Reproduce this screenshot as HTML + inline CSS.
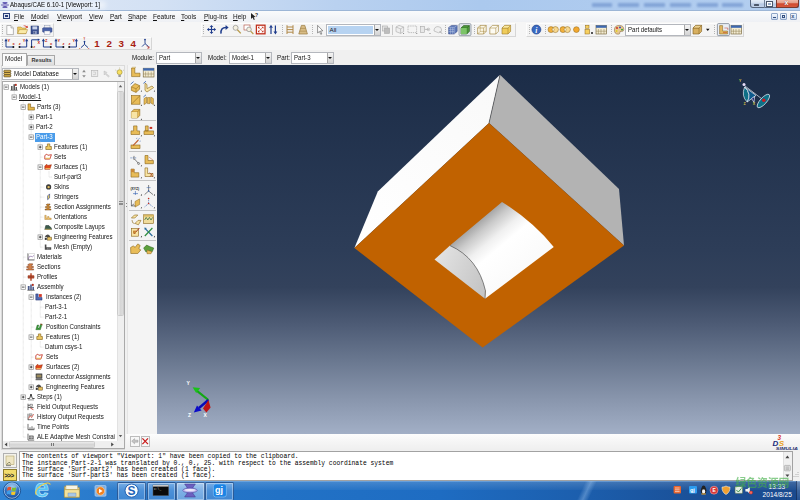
<!DOCTYPE html><html><head><meta charset="utf-8"><title>Abaqus/CAE 6.10-1 [Viewport: 1]</title><style>
*{margin:0;padding:0;box-sizing:border-box}
html,body{width:800px;height:500px;overflow:hidden;background:#f0f0f0}
body{position:relative;font-family:"Liberation Sans",sans-serif;font-size:6.4px;color:#1a1a1a;line-height:1}
.a{position:absolute}
.t{position:absolute;white-space:nowrap;line-height:8px;height:8px}
.m{position:absolute;white-space:nowrap;font-family:"Liberation Mono",monospace;font-size:6.32px;line-height:7px;height:7px;color:#000}
.sel{position:absolute;background:#fff;border:1px solid #b4b7bd;height:12px}
.sel i{position:absolute;right:0;top:0;bottom:0;width:6px;background:linear-gradient(#f4f4f4,#d4d4d4);border-left:1px solid #a8a8a8}
.sel i:after{content:"";position:absolute;left:0.4px;top:4px;border:2.1px solid transparent;border-top:2.8px solid #111;border-bottom:0}
.sel span{position:absolute;left:2px;top:1.2px;line-height:8px;white-space:nowrap;font-size:6.9px;transform:scaleX(.88);transform-origin:0 50%;color:#111}
.lb{font-size:6.9px;transform:scaleX(.9);transform-origin:0 50%;color:#111}
.bx{position:absolute;width:5px;height:5px;border:1px solid #8a8a8a;background:#fff}
.bx:before{content:"";position:absolute;left:0.5px;top:1px;width:2px;height:1px;background:#333}
.bx.p:after{content:"";position:absolute;left:1px;top:0.5px;width:1px;height:2px;background:#333}
.grip{position:absolute;width:1px;border-left:1px dotted #b4b4b4}
.tr{font-size:7px;transform:scaleX(.875);transform-origin:0 50%;color:#151515}
.sep{position:absolute;width:1px;background:#c8c8c8}
</style></head><body>
<div class="a" style="left:0;top:0;width:800px;height:10px;background:linear-gradient(90deg,#e0e9f6 0%,#d3e1f4 20%,#b9d1f0 42%,#abc9ee 60%,#b3cef0 100%)"></div>
<div class="a" style="left:0;top:9.5px;width:800px;height:1px;background:#9db6d6"></div>
<div class="a" style="left:6px;top:1px;width:100px;height:7.5px;background:#fff;opacity:.5;filter:blur(2px);border-radius:4px"></div>
<svg class="a" style="left:1px;top:1px" width="8" height="8" viewBox="0 0 8 8"><path d="M1.2,1 H6.8 Q5.2,2.6 5.2,4 Q5.2,5.4 6.8,7 H1.2 Q2.8,5.4 2.8,4 Q2.8,2.6 1.2,1Z" fill="#6a63b8"/><ellipse cx="4" cy="4" rx="3.8" ry="1.1" fill="#b9b5e4" stroke="#4b4696" stroke-width="0.4"/></svg>
<div class="t" style="left:10px;top:1px;font-size:6.6px;transform:scaleX(.93);transform-origin:0 50%;color:#000">Abaqus/CAE 6.10-1 [Viewport: 1]</div>
<div class="a" style="left:592px;top:2.5px;width:20px;height:4.5px;background:#5f85c4;opacity:.55;filter:blur(1.2px)"></div>
<div class="a" style="left:618px;top:2.5px;width:21px;height:4.5px;background:#5f85c4;opacity:.55;filter:blur(1.2px)"></div>
<div class="a" style="left:644px;top:2.5px;width:21px;height:4.5px;background:#5f85c4;opacity:.55;filter:blur(1.2px)"></div>
<div class="a" style="left:670px;top:2.5px;width:21px;height:4.5px;background:#5f85c4;opacity:.55;filter:blur(1.2px)"></div>
<div class="a" style="left:697px;top:2.5px;width:21px;height:4.5px;background:#5f85c4;opacity:.55;filter:blur(1.2px)"></div>
<div class="a" style="left:722px;top:2.5px;width:21px;height:4.5px;background:#5f85c4;opacity:.55;filter:blur(1.2px)"></div>
<div class="a" style="left:749.5px;top:0;width:49px;height:8.3px;border:0.7px solid #56657e;border-top:0;border-radius:0 0 3px 3px;background:linear-gradient(#e4edf8,#cfdcee 48%,#b3c6e2 52%,#c3d3ea)"></div>
<div class="a" style="left:775.5px;top:0;width:23px;height:8.3px;border:0.7px solid #7a3a30;border-top:0;border-radius:0 0 3px 0;background:linear-gradient(#efb8a8,#e39a86 45%,#cf4a30 52%,#d8583c)"></div>
<div class="a" style="left:763.8px;top:0;width:0.7px;height:8px;background:#6f7f96"></div>
<div class="a" style="left:754px;top:4.2px;width:5.4px;height:2.2px;background:#fff;border:0.5px solid #4a566a;border-radius:0.6px"></div>
<div class="a" style="left:767px;top:1.6px;width:5px;height:4.6px;border:0.9px solid #fdfdfd;outline:0.5px solid #4a566a;background:rgba(120,140,170,.5)"></div>
<div class="t" style="left:784.6px;top:-0.9px;font-size:7px;font-weight:bold;color:#fff;text-shadow:0 0 1px #5a2018">x</div>
<div class="a" style="left:0;top:10.5px;width:800px;height:11.5px;background:linear-gradient(#fafbfc,#eef0f4)"></div>
<div class="a" style="left:3px;top:13px;width:6.5px;height:6px;border:1px solid #2a3f7a;border-top-width:1.5px;background:#dfe6f4"></div><div class="a" style="left:4.7px;top:15.3px;width:3px;height:2px;background:#2a3f7a"></div>
<div class="t" style="left:14px;top:12.5px;font-size:6.9px;transform:scaleX(.94);transform-origin:0 50%;color:#111"><u>F</u>ile</div>
<div class="t" style="left:31px;top:12.5px;font-size:6.9px;transform:scaleX(.94);transform-origin:0 50%;color:#111"><u>M</u>odel</div>
<div class="t" style="left:56.5px;top:12.5px;font-size:6.9px;transform:scaleX(.94);transform-origin:0 50%;color:#111"><u>V</u>iewport</div>
<div class="t" style="left:89px;top:12.5px;font-size:6.9px;transform:scaleX(.94);transform-origin:0 50%;color:#111"><u>V</u>iew</div>
<div class="t" style="left:109.5px;top:12.5px;font-size:6.9px;transform:scaleX(.94);transform-origin:0 50%;color:#111"><u>P</u>art</div>
<div class="t" style="left:128px;top:12.5px;font-size:6.9px;transform:scaleX(.94);transform-origin:0 50%;color:#111"><u>S</u>hape</div>
<div class="t" style="left:152.5px;top:12.5px;font-size:6.9px;transform:scaleX(.94);transform-origin:0 50%;color:#111"><u>F</u>eature</div>
<div class="t" style="left:181px;top:12.5px;font-size:6.9px;transform:scaleX(.94);transform-origin:0 50%;color:#111"><u>T</u>ools</div>
<div class="t" style="left:203.5px;top:12.5px;font-size:6.9px;transform:scaleX(.94);transform-origin:0 50%;color:#111"><u>P</u>lug-ins</div>
<div class="t" style="left:233px;top:12.5px;font-size:6.9px;transform:scaleX(.94);transform-origin:0 50%;color:#111"><u>H</u>elp</div>
<svg class="a" style="left:250px;top:12px" width="9" height="9" viewBox="0 0 9 9"><path d="M1,1 L1,7 L2.6,5.6 L3.8,8 L4.8,7.5 L3.7,5.2 L5.6,5 Z" fill="#222"/><text x="5" y="5" font-family="Liberation Sans, sans-serif" font-size="5" font-weight="bold" fill="#222">?</text></svg>
<div class="a" style="left:771px;top:12.5px;width:7px;height:7px;border:1px solid #8fa6c8;border-radius:1px;background:linear-gradient(#f4f8fd,#cfdcf0)"></div>
<div class="a" style="left:780px;top:12.5px;width:7px;height:7px;border:1px solid #8fa6c8;border-radius:1px;background:linear-gradient(#f4f8fd,#cfdcf0)"></div>
<div class="a" style="left:789.5px;top:12.5px;width:7px;height:7px;border:1px solid #8fa6c8;border-radius:1px;background:linear-gradient(#f4f8fd,#cfdcf0)"></div>
<div class="a" style="left:773px;top:17px;width:3px;height:1px;background:#34507f"></div>
<div class="a" style="left:782px;top:14.5px;width:3px;height:3px;border:1px solid #34507f"></div>
<div class="t" style="left:791.2px;top:11.6px;font-size:5.5px;font-weight:bold;color:#34507f">x</div>
<div class="a" style="left:0;top:22px;width:800px;height:28px;background:#f6f6f6"></div>
<div class="a" style="left:0px;top:22.5px;width:54px;height:14px;border-right:1px solid #d6d6d6;border-bottom:1px solid #d6d6d6;border-left:1px solid #fdfdfd;border-top:1px solid #fdfdfd;background:#f4f4f4"></div>
<div class="a" style="left:0px;top:36.5px;width:152px;height:13px;border-right:1px solid #d6d6d6;border-bottom:1px solid #d6d6d6;border-left:1px solid #fdfdfd;border-top:1px solid #fdfdfd;background:#f4f4f4"></div>
<div class="a" style="left:201px;top:22.5px;width:315px;height:14px;border-right:1px solid #d6d6d6;border-bottom:1px solid #d6d6d6;border-left:1px solid #fdfdfd;border-top:1px solid #fdfdfd;background:#f4f4f4"></div>
<div class="a" style="left:526px;top:22.5px;width:218px;height:14px;border-right:1px solid #d6d6d6;border-bottom:1px solid #d6d6d6;border-left:1px solid #fdfdfd;border-top:1px solid #fdfdfd;background:#f4f4f4"></div>
<div class="grip" style="left:2px;top:25px;height:9px"></div>
<div class="grip" style="left:2px;top:39px;height:8px"></div>
<div class="grip" style="left:203px;top:25px;height:9px"></div>
<div class="grip" style="left:281.5px;top:25px;height:9px"></div>
<div class="grip" style="left:312px;top:25px;height:9px"></div>
<div class="grip" style="left:444.5px;top:25px;height:9px"></div>
<div class="grip" style="left:474px;top:25px;height:9px"></div>
<div class="grip" style="left:528.5px;top:25px;height:9px"></div>
<div class="grip" style="left:545px;top:25px;height:9px"></div>
<div class="grip" style="left:611px;top:25px;height:9px"></div>
<div class="grip" style="left:714px;top:25px;height:9px"></div>
<div class="sep" style="left:392px;top:24.5px;height:10px"></div>
<svg class="a" style="left:0;top:0" width="800" height="66" viewBox="0 0 800 66" font-family="Liberation Sans, sans-serif"><style>.r{font-size:4px;font-weight:bold;fill:#c41808}</style><path d="M6.8,25.5 H11 L13.4,28 V34.6 H6.8 Z" fill="#fdfdfd" stroke="#8a8a8a" stroke-width="0.6"/><path d="M11,25.5 V28 H13.4" fill="#e4e4e4" stroke="#8a8a8a" stroke-width="0.5"/><path d="M17.6,27 H21 L22,28 H26 V33.6 H17.6 Z" fill="#ecca62" stroke="#a8842a" stroke-width="0.5"/><path d="M19.4,29.6 H27.6 L26,33.6 H17.6 Z" fill="#faeaa6" stroke="#a8842a" stroke-width="0.5"/><path d="M22.4,26.2 Q25,24.6 27,26.4 L27.6,25.4 L27.8,28 L25.4,27.6 L26.2,26.9 Q24.8,25.8 22.4,26.2Z" fill="#d02818"/><rect x="31" y="26" width="7.6" height="8" fill="#3c5190" stroke="#27386c" stroke-width="0.5"/><rect x="32.4" y="26.4" width="4.8" height="3" fill="#c9d3ea"/><rect x="33" y="31" width="3.8" height="3" fill="#8e9cc4"/><rect x="33.6" y="31.6" width="1" height="2" fill="#27386c"/><rect x="44.4" y="25.2" width="5.6" height="3" fill="#f2f2f2" stroke="#7a86a8" stroke-width="0.4"/><rect x="42.6" y="27.8" width="9.4" height="4.4" rx="0.8" fill="#4a62a8" stroke="#2c3f7c" stroke-width="0.5"/><rect x="44.4" y="31" width="5.6" height="3.6" fill="#fafafa" stroke="#7a86a8" stroke-width="0.4"/><path d="M6,40.4 V47 H13.4" fill="none" stroke="#1f3c8c" stroke-width="1"/><path d="M6,38.6 l-1.6,2.6 h3.2z" fill="#1f3c8c"/><circle cx="13.4" cy="47" r="1" fill="#111"/><text x="7.6" y="41.6" class="r">Y</text><text x="12.6" y="45.4" class="r">x</text><path d="M26.7,40.4 V47 H19.5" fill="none" stroke="#1f3c8c" stroke-width="1"/><path d="M26.7,38.6 l-1.6,2.6 h3.2z" fill="#1f3c8c"/><circle cx="19.5" cy="47" r="1" fill="#111"/><text x="22.7" y="41.6" class="r">Y</text><text x="18.7" y="45.4" class="r">z</text><path d="M31.6,47 V39.8 H38.2" fill="none" stroke="#1f3c8c" stroke-width="1"/><path d="M40.0,39.8 l-2.2,-1.3 v2.6z" fill="#1f3c8c"/><circle cx="31.6" cy="47" r="1" fill="#111"/><text x="37.6" y="44.4" class="r">X</text><text x="33.2" y="48" class="r">z</text><path d="M43.4,40.4 V47 H50.8" fill="none" stroke="#1f3c8c" stroke-width="1"/><path d="M43.4,38.6 l-1.6,2.6 h3.2z" fill="#1f3c8c"/><circle cx="50.8" cy="47" r="1" fill="#111"/><text x="45.0" y="41.6" class="r">Z</text><text x="50.0" y="45.4" class="r">x</text><path d="M56,40.4 V47 H63.4" fill="none" stroke="#1f3c8c" stroke-width="1"/><path d="M56,38.6 l-1.6,2.6 h3.2z" fill="#1f3c8c"/><circle cx="63.4" cy="47" r="1" fill="#111"/><text x="57.6" y="41.6" class="r">Y</text><text x="62.6" y="45.4" class="r">z</text><path d="M76.4,40.4 V47 H69.2" fill="none" stroke="#1f3c8c" stroke-width="1"/><path d="M76.4,38.6 l-1.6,2.6 h3.2z" fill="#1f3c8c"/><circle cx="69.2" cy="47" r="1" fill="#111"/><text x="72.4" y="41.6" class="r">Y</text><text x="68.4" y="45.4" class="r">z</text><path d="M84.5,41 V44.4 L81,47.6 M84.5,44.4 L88,47.6" fill="none" stroke="#1f3c8c" stroke-width="1"/><circle cx="84.5" cy="41.6" r="0.9" fill="#1f3c8c"/><text x="83.6" y="40.2" style="font-size:2.6px" class="r">Y</text><text x="79.2" y="49" style="font-size:2.4px" class="r">z</text><text x="88" y="49" style="font-size:2.4px" class="r">x</text><text x="94.2" y="47.3" font-size="9.8" font-weight="bold" fill="#a82010">1</text><text x="106.4" y="47.3" font-size="9.8" font-weight="bold" fill="#a82010">2</text><text x="118.6" y="47.3" font-size="9.8" font-weight="bold" fill="#a82010">3</text><text x="130.6" y="47.3" font-size="9.8" font-weight="bold" fill="#a82010">4</text><path d="M145,39.2 V43.6 L142,46.6 M145,43.6 L148.6,46.6" fill="none" stroke="#1f3c8c" stroke-width="0.9"/><circle cx="145" cy="39.6" r="0.8" fill="#1f3c8c"/><path d="M146.6,46 l2.6,2 M147.4,48.6 l1.8,-0.6 l-0.4,-1.8" fill="none" stroke="#b42014" stroke-width="0.6"/><path d="M211.5,24.9 l1.8,2.2 h-1.2 v1.8 h1.8 v-1.2 l2.2,1.8 l-2.2,1.8 v-1.2 h-1.8 v1.8 h1.2 l-1.8,2.2 l-1.8,-2.2 h1.2 v-1.8 h-1.8 v1.2 l-2.2,-1.8 l2.2,-1.8 v1.2 h1.8 v-1.8 h-1.2z" fill="#1f3c8c"/><path d="M221,33.6 Q220.4,27.4 226,27.4" fill="none" stroke="#1f3c8c" stroke-width="1.5"/><path d="M225.6,25 l3,2.5 l-3,2.4z" fill="#1f3c8c"/><circle cx="235.6" cy="27.8" r="2.5" fill="#f4f0e0" stroke="#8c8c8c" stroke-width="0.7"/><path d="M237.4,29.8 L240.8,33.4" stroke="#b89a4a" stroke-width="1.3"/><rect x="244" y="25" width="6" height="5" fill="#fff" stroke="#b04a3a" stroke-width="0.6"/><circle cx="249" cy="29.4" r="2.3" fill="#f4f0e0" stroke="#8c8c8c" stroke-width="0.7"/><path d="M250.6,31.2 L253.4,34" stroke="#b89a4a" stroke-width="1.2"/><rect x="256.4" y="25.2" width="8.6" height="8.6" fill="#fff" stroke="#c0301c" stroke-width="1.3"/><path d="M258,26.8 l2,0 l-2,2z M263.4,26.8 l0,2 l-2,-2z M258,32.2 l0,-2 l2,2z M263.4,32.2 l-2,0 l2,-2z" fill="#c0301c"/><path d="M258.4,27.2 L263,31.8 M263,27.2 L258.4,31.8" stroke="#c0301c" stroke-width="0.6"/><path d="M271,34 V27.4 M275.4,25.4 V32" stroke="#1f3c8c" stroke-width="1.2" fill="none"/><path d="M271,24.8 l-1.9,3 h3.8z M275.4,34.4 l-1.9,-3 h3.8z" fill="#1f3c8c"/><path d="M287,25.2 V34 M293,25.2 V34 M287,27 H293 M287,29.6 H293 M287,32.2 H293" stroke="#b08848" stroke-width="1" fill="none"/><path d="M301.4,25.4 H304.8 L307.4,34 H298.8 Z" fill="#d8bc86" stroke="#98783c" stroke-width="0.7"/><path d="M300.6,28.4 H305.6 M299.8,31.2 H306.4" stroke="#98783c" stroke-width="0.5"/><path d="M317.6,25.4 V33 L319.4,31.4 L320.8,34.4 L321.8,33.9 L320.5,31 L322.8,30.8 Z" fill="#fff" stroke="#333" stroke-width="0.5"/><rect x="382.6" y="26" width="5" height="5" fill="#e4e4e4" stroke="#a8a8a8" stroke-width="0.6"/><rect x="384.6" y="28" width="5" height="5.4" fill="#bdbdbd" stroke="#a8a8a8" stroke-width="0.6"/><path d="M396,27 l3,-1.6 l4.6,1.6 v4.6 l-3,1.8 l-4.6,-1.8z M396,27 l4.6,1.8 l3,-1.8 M400.6,28.8 v4.6" fill="#eee" stroke="#a8a8a8" stroke-width="0.6"/><circle cx="403.6" cy="33.4" r="0.5" fill="#666"/><rect x="408" y="26" width="8.6" height="6.6" fill="none" stroke="#a8a8a8" stroke-width="0.7" stroke-dasharray="1.4 0.8"/><circle cx="416.8" cy="33.6" r="0.5" fill="#666"/><rect x="420.6" y="26.4" width="4" height="6" fill="#e8e8e8" stroke="#a8a8a8" stroke-width="0.6"/><path d="M425,29.4 h4" stroke="#a8a8a8" stroke-width="0.7"/><circle cx="428.4" cy="29.4" r="1.3" fill="none" stroke="#a8a8a8" stroke-width="0.6"/><circle cx="430" cy="33.6" r="0.5" fill="#666"/><path d="M434,31 q0,-4.4 4,-4.4 q3.6,0 3.6,3.4 q0,2.8 -3,2.8 z" fill="#f0f0f0" stroke="#a8a8a8" stroke-width="0.6"/><path d="M439.6,31 l2.6,2.8" stroke="#a8a8a8" stroke-width="0.9"/><path d="M448.6,27.4 l3,-2 h5.6 v6 l-3,2.6 h-5.6z" fill="#5d78b8" stroke="#2c3f7c" stroke-width="0.5"/><path d="M448.6,29.4 h5.6 M448.6,31.6 h5.6 M450.6,27.4 v6.6 M452.6,27.4 v6.6 M448.6,27.4 h5.6 v6.6 M454.2,27.4 l3,-2" stroke="#cdd6ee" stroke-width="0.4" fill="none"/><rect x="459" y="23.6" width="12" height="12" rx="1.2" fill="#dfe4ea" stroke="#7c8694" stroke-width="0.7"/><path d="M461,28 l2.6,-2.4 h5.8 v5.8 l-2.6,2.6 h-5.8z" fill="#4e9a3c" stroke="#23561a" stroke-width="0.6"/><path d="M461,28 h5.8 v6 M466.8,28 l2.6,-2.4" stroke="#23561a" stroke-width="0.5" fill="none"/><rect x="461" y="28" width="5.8" height="6" fill="#7cc468"/><path d="M477.6,28 l2.6,-2.6 h6 v6 l-2.6,2.6 h-6z" fill="#fbf6e4" stroke="#9a7a2c" stroke-width="0.6"/><path d="M477.6,28 h6 v6 M483.6,28 l2.6,-2.6" stroke="#9a7a2c" stroke-width="0.5" fill="none"/><path d="M480.2,25.4 v6 h6 M480.2,31.4 l-2.6,2.6" stroke="#9a7a2c" stroke-width="0.4" fill="none"/><path d="M489.8,28 l2.6,-2.6 h6 v6 l-2.6,2.6 h-6z" fill="#fdfbf2" stroke="#9a7a2c" stroke-width="0.6"/><path d="M489.8,28 h6 v6 M495.8,28 l2.6,-2.6" stroke="#9a7a2c" stroke-width="0.5" fill="none"/><path d="M502,28 l2.6,-2.6 h6 v6 l-2.6,2.6 h-6z" fill="#f0cc5a" stroke="#9a7a2c" stroke-width="0.6"/><path d="M502,28 h6 v6 M508,28 l2.6,-2.6" stroke="#9a7a2c" stroke-width="0.5" fill="none"/><path d="M502,28 l2.6,-2.6 h6 l-2.6,2.6z" fill="#fbe9a0" stroke="#9a7a2c" stroke-width="0.4"/><circle cx="536.4" cy="29.6" r="4.5" fill="#3868c0" stroke="#1c3c84" stroke-width="0.6"/><text x="535.3" y="32.6" font-size="7.5" font-weight="bold" font-style="italic" fill="#fff" font-family="Liberation Serif, serif">i</text><circle cx="551" cy="29.6" r="3" fill="#f2b03c" stroke="#8c6414" stroke-width="0.5"/><circle cx="555.4" cy="29.6" r="3" fill="#f7d890" stroke="#8c6414" stroke-width="0.5"/><path d="M553.2,27.5 a3,3 0 0 1 0,4.2 a3,3 0 0 1 0,-4.2z" fill="#fff6dc" stroke="#8c6414" stroke-width="0.4"/><circle cx="563" cy="29.6" r="3" fill="#f2b03c" stroke="#8c6414" stroke-width="0.5"/><circle cx="567.4" cy="29.6" r="3" fill="#f7d890" stroke="#8c6414" stroke-width="0.5"/><path d="M565.2,27.5 a3,3 0 0 1 0,4.2 a3,3 0 0 1 0,-4.2z" fill="#fff6dc" stroke="#8c6414" stroke-width="0.4"/><circle cx="576.4" cy="29.6" r="2.9" fill="#f2a830" stroke="#8c6414" stroke-width="0.5"/><rect x="585.6" y="25.2" width="3.4" height="3" fill="#f7d060" stroke="#8c6414" stroke-width="0.5"/><rect x="585" y="29.2" width="4.6" height="4.8" fill="#f7d060" stroke="#8c6414" stroke-width="0.5"/><rect x="591" y="32" width="2" height="2" fill="#555"/><rect x="596" y="25.4" width="10.6" height="8.6" fill="#f4ecd2" stroke="#6c5a2c" stroke-width="0.6"/><rect x="596" y="25.4" width="10.6" height="2.4" fill="#3e68b0"/><path d="M598.4,29 v5 M601,29 v5 M604,29 v5 M596,31.2 h10.6" stroke="#8a7a4c" stroke-width="0.5"/><path d="M614.4,30 q0,-4.6 4.8,-4.6 q4.6,0 4.6,4 q0,2.4 -2.6,2 q-1.6,-0.2 -1.4,1.2 q0.2,1.6 -1.6,1.6 q-3.8,0 -3.8,-4.2z" fill="#e8c890" stroke="#7c5c2c" stroke-width="0.5"/><circle cx="617" cy="28" r="0.9" fill="#d02020"/><circle cx="620" cy="27.4" r="0.9" fill="#2040c0"/><circle cx="622" cy="29.6" r="0.9" fill="#20a030"/><circle cx="616.6" cy="31" r="0.9" fill="#e0d020"/><path d="M693,28 l2.6,-2.6 h6 v6 l-2.6,2.6 h-6z" fill="#d8b060" stroke="#7c5c1c" stroke-width="0.6"/><path d="M693,28 h6 v6 M699,28 l2.6,-2.6" stroke="#7c5c1c" stroke-width="0.5" fill="none"/><path d="M693,28 l2.6,-2.6 h6 l-2.6,2.6z" fill="#ecd090" stroke="#7c5c1c" stroke-width="0.4"/><path d="M706,28.8 h3.6 l-1.8,2.2z" fill="#111"/><rect x="717.4" y="23.6" width="12" height="12" rx="1" fill="#e9eef5" stroke="#6c7684" stroke-width="0.7"/><path d="M719.6,25.6 h3 v5.4 h5 v3 h-8z" fill="#e2b860" stroke="#7c5c1c" stroke-width="0.5"/><path d="M724.4,28 h3.4 v2 M723,32.6 h4" stroke="#c03020" stroke-width="0.5" fill="none"/><rect x="731" y="25.4" width="10.6" height="8.6" fill="#f4ecd2" stroke="#6c5a2c" stroke-width="0.6"/><rect x="731" y="25.4" width="10.6" height="2.4" fill="#3e68b0"/><path d="M733.4,29 v5 M736,29 v5 M739,29 v5 M731,31.2 h10.6" stroke="#8a7a4c" stroke-width="0.5"/></svg>
<div class="sel" style="left:325.5px;top:23.5px;width:55px;height:12px"><span style="left:1px;top:1px;right:7px;bottom:1px;background:#b7d3f1;padding:0 0 0 2px;line-height:8px;transform:none;font-size:6.2px">All</span><i></i></div>
<div class="sel" style="left:625px;top:23.5px;width:66px;height:12px"><span>Part defaults</span><i></i></div>
<div class="t lb" style="left:131.5px;top:53.7px">Module:</div>
<div class="sel" style="left:155.5px;top:51.5px;width:46px"><span>Part</span><i></i></div>
<div class="t lb" style="left:208px;top:53.7px">Model:</div>
<div class="sel" style="left:228.5px;top:51.5px;width:43px"><span>Model-1</span><i></i></div>
<div class="t lb" style="left:277px;top:53.7px">Part:</div>
<div class="sel" style="left:290.5px;top:51.5px;width:43px"><span>Part-3</span><i></i></div>
<div class="a" style="left:1px;top:64.5px;width:124px;height:385px;border:1px solid #dadada;background:#f3f3f3"></div>
<div class="a" style="left:26.5px;top:55px;width:28px;height:10px;border:1px solid #a8a8a8;border-bottom:0;background:linear-gradient(#f2f2f2,#dcdcdc)"></div>
<div class="t" style="left:31.5px;top:56.2px;font-size:5.6px;font-weight:bold;color:#333">Results</div>
<div class="a" style="left:1.5px;top:52.5px;width:25.5px;height:13px;border:1px solid #a8a8a8;border-bottom:0;background:#fbfbfb"></div>
<div class="t" style="left:4.8px;top:55.2px;font-size:7px;transform:scaleX(.9);transform-origin:0 50%">Model</div>
<div class="sel" style="left:2px;top:67.5px;width:77px;height:12.5px"><span style="left:10.6px;top:1.6px;font-size:7px;transform:scaleX(.88)">Model Database</span><i></i></div>
<svg class="a" style="left:3px;top:69px" width="9" height="9" viewBox="0 0 9 9"><rect x="0.8" y="1.2" width="7" height="2.1" rx="0.8" fill="#e0b850" stroke="#3c2c08" stroke-width="0.6"/><rect x="0.8" y="3.5" width="7" height="2.1" rx="0.8" fill="#e0b850" stroke="#3c2c08" stroke-width="0.6"/><rect x="0.8" y="5.8" width="7" height="2.1" rx="0.8" fill="#e0b850" stroke="#3c2c08" stroke-width="0.6"/></svg>
<svg class="a" style="left:80px;top:67px" width="46" height="13" viewBox="80 67 46 13"><path d="M84,69.8 l1.8,2.4 h-3.6z M84,77.6 l1.8,-2.4 h-3.6z" fill="#8c8c8c"/><rect x="91.4" y="70.4" width="6.4" height="6" fill="#ececec" stroke="#b0b0b0" stroke-width="0.6"/><path d="M93,72 h2.4 v2.6 h-2.4" stroke="#b8b8b8" stroke-width="0.5" fill="none"/><path d="M104,71 l3,1.4 l-1,1 l3.4,2.8 l-1,0.8 l-3.2,-3 l-1,1z" fill="#d8d8d8" stroke="#b4b4b4" stroke-width="0.4"/><circle cx="119.6" cy="72.2" r="2.5" fill="#f8e060" stroke="#8a7a1c" stroke-width="0.5"/><rect x="118.4" y="74.8" width="2.4" height="2.2" fill="#9a9a9a"/><path d="M115.4,70 l1,0.8 M123.8,70 l-1,0.8 M119.6,67.6 v1" stroke="#8a7a1c" stroke-width="0.4"/></svg>
<div class="a" style="left:2px;top:80.5px;width:122.5px;height:368px;background:#fff;border:1px solid #a9a9a9"></div>
<div class="a" style="left:116.5px;top:81.5px;width:7.5px;height:359px;background:#efefef;border-left:1px solid #e2e2e2"></div>
<div class="a" style="left:117px;top:90.5px;width:7px;height:225px;border:1px solid #cbcbcb;border-radius:1.5px;background:linear-gradient(90deg,#ececec,#d6d6d6 50%,#dcdcdc)"></div>
<div class="a" style="left:118.5px;top:201px;width:4px;height:4px;border-top:1px solid #8c8c8c;border-bottom:1px solid #8c8c8c"></div><div class="a" style="left:118.5px;top:202.7px;width:4px;height:1px;background:#8c8c8c"></div>
<svg class="a" style="left:117px;top:82px" width="7" height="358" viewBox="0 0 7 358"><path d="M3.5,3 l1.7,2.2 h-3.4z" fill="#5a5a5a"/><path d="M3.5,355.2 l1.7,-2.2 h-3.4z" fill="#5a5a5a"/></svg>
<div class="a" style="left:3px;top:440.5px;width:113.5px;height:7.5px;background:#efefef"></div>
<div class="a" style="left:9px;top:441px;width:86px;height:6.5px;border:1px solid #cbcbcb;border-radius:1.5px;background:linear-gradient(#ececec,#d6d6d6 50%,#dcdcdc)"></div>
<div class="a" style="left:50.5px;top:442.5px;width:3px;height:3.5px;border-left:1px solid #777;border-right:1px solid #777"></div>
<svg class="a" style="left:3px;top:441px" width="114" height="7" viewBox="0 0 114 7"><path d="M1.6,3.4 l2.6,-2 v4z" fill="#444"/><path d="M110.8,3.4 l-2.6,-2 v4z" fill="#444"/></svg>
<div class="a" style="left:116.5px;top:440.5px;width:7.5px;height:7.5px;background:#f0f0f0"></div>
<div class="t tr" style="left:20px;top:83.19999999999999px;">Models (1)</div>
<div class="t tr" style="left:19px;top:93.19999999999999px;"><u>Model-1</u></div>
<div class="t tr" style="left:37px;top:103.19999999999999px;">Parts (3)</div>
<div class="t tr" style="left:36px;top:113.19999999999999px;">Part-1</div>
<div class="t tr" style="left:36px;top:123.19999999999999px;">Part-2</div>
<div class="a" style="left:34.5px;top:132.6px;width:20.5px;height:9.5px;background:#4a9cea"></div>
<div class="t tr" style="left:36px;top:133.2px;color:#fff;">Part-3</div>
<div class="t tr" style="left:54px;top:143.2px;">Features (1)</div>
<div class="t tr" style="left:54px;top:153.2px;">Sets</div>
<div class="t tr" style="left:54px;top:163.2px;">Surfaces (1)</div>
<div class="t tr" style="left:53.5px;top:173.2px;">Surf-part3</div>
<div class="t tr" style="left:54px;top:183.2px;">Skins</div>
<div class="t tr" style="left:54px;top:193.2px;">Stringers</div>
<div class="t tr" style="left:54px;top:203.2px;">Section Assignments</div>
<div class="t tr" style="left:54px;top:213.2px;">Orientations</div>
<div class="t tr" style="left:54px;top:223.2px;">Composite Layups</div>
<div class="t tr" style="left:54px;top:233.2px;">Engineering Features</div>
<div class="t tr" style="left:54px;top:243.2px;">Mesh (Empty)</div>
<div class="t tr" style="left:37px;top:253.20000000000002px;">Materials</div>
<div class="t tr" style="left:37px;top:263.20000000000005px;">Sections</div>
<div class="t tr" style="left:37px;top:273.20000000000005px;">Profiles</div>
<div class="t tr" style="left:37px;top:283.20000000000005px;">Assembly</div>
<div class="t tr" style="left:45.5px;top:293.20000000000005px;">Instances (2)</div>
<div class="t tr" style="left:45px;top:303.20000000000005px;">Part-3-1</div>
<div class="t tr" style="left:45px;top:313.20000000000005px;">Part-2-1</div>
<div class="t tr" style="left:45.5px;top:323.20000000000005px;">Position Constraints</div>
<div class="t tr" style="left:45.5px;top:333.20000000000005px;">Features (1)</div>
<div class="t tr" style="left:45px;top:343.20000000000005px;">Datum csys-1</div>
<div class="t tr" style="left:45.5px;top:353.20000000000005px;">Sets</div>
<div class="t tr" style="left:45.5px;top:363.20000000000005px;">Surfaces (2)</div>
<div class="t tr" style="left:45.5px;top:373.20000000000005px;">Connector Assignments</div>
<div class="t tr" style="left:45.5px;top:383.20000000000005px;">Engineering Features</div>
<div class="t tr" style="left:37px;top:393.20000000000005px;">Steps (1)</div>
<div class="t tr" style="left:37px;top:403.20000000000005px;">Field Output Requests</div>
<div class="t tr" style="left:37px;top:413.20000000000005px;">History Output Requests</div>
<div class="t tr" style="left:37px;top:423.20000000000005px;">Time Points</div>
<div class="t tr" style="left:37px;top:433.20000000000005px;">ALE Adaptive Mesh Constrai</div>
<svg class="a" style="left:0;top:80px;pointer-events:none" width="126" height="362" viewBox="0 80 126 362"><path d="M14.2,91.1 V97.1" stroke="#c4c4c4" stroke-width="0.6" stroke-dasharray="0.6 0.6"/><path d="M23.2,101.1 V437.1" stroke="#c4c4c4" stroke-width="0.6" stroke-dasharray="0.6 0.6"/><path d="M31.2,111.1 V137.1" stroke="#c4c4c4" stroke-width="0.6" stroke-dasharray="0.6 0.6"/><path d="M31.2,291.1 V387.1" stroke="#c4c4c4" stroke-width="0.6" stroke-dasharray="0.6 0.6"/><path d="M40.2,141.1 V247.1" stroke="#c4c4c4" stroke-width="0.6" stroke-dasharray="0.6 0.6"/><path d="M40.2,301.1 V317.1" stroke="#c4c4c4" stroke-width="0.6" stroke-dasharray="0.6 0.6"/><path d="M40.2,341.1 V347.1" stroke="#c4c4c4" stroke-width="0.6" stroke-dasharray="0.6 0.6"/><path d="M49,171.1 V177.1" stroke="#c4c4c4" stroke-width="0.6" stroke-dasharray="0.6 0.6"/><path d="M14.2,97.1 H18.2" stroke="#c4c4c4" stroke-width="0.6" stroke-dasharray="0.6 0.6"/><path d="M23.2,107.1 H26.2" stroke="#c4c4c4" stroke-width="0.6" stroke-dasharray="0.6 0.6"/><path d="M31.2,117.1 H35.2" stroke="#c4c4c4" stroke-width="0.6" stroke-dasharray="0.6 0.6"/><path d="M31.2,127.1 H35.2" stroke="#c4c4c4" stroke-width="0.6" stroke-dasharray="0.6 0.6"/><path d="M31.2,137.1 H35.2" stroke="#c4c4c4" stroke-width="0.6" stroke-dasharray="0.6 0.6"/><path d="M40.2,147.1 H44.2" stroke="#c4c4c4" stroke-width="0.6" stroke-dasharray="0.6 0.6"/><path d="M40.2,157.1 H43.2" stroke="#c4c4c4" stroke-width="0.6" stroke-dasharray="0.6 0.6"/><path d="M40.2,167.1 H43.2" stroke="#c4c4c4" stroke-width="0.6" stroke-dasharray="0.6 0.6"/><path d="M49,177.1 H52.7" stroke="#c4c4c4" stroke-width="0.6" stroke-dasharray="0.6 0.6"/><path d="M40.2,187.1 H44.2" stroke="#c4c4c4" stroke-width="0.6" stroke-dasharray="0.6 0.6"/><path d="M40.2,197.1 H44.2" stroke="#c4c4c4" stroke-width="0.6" stroke-dasharray="0.6 0.6"/><path d="M40.2,207.1 H44.2" stroke="#c4c4c4" stroke-width="0.6" stroke-dasharray="0.6 0.6"/><path d="M40.2,217.1 H43.2" stroke="#c4c4c4" stroke-width="0.6" stroke-dasharray="0.6 0.6"/><path d="M40.2,227.1 H43.2" stroke="#c4c4c4" stroke-width="0.6" stroke-dasharray="0.6 0.6"/><path d="M40.2,237.1 H43.2" stroke="#c4c4c4" stroke-width="0.6" stroke-dasharray="0.6 0.6"/><path d="M40.2,247.1 H43.2" stroke="#c4c4c4" stroke-width="0.6" stroke-dasharray="0.6 0.6"/><path d="M23.2,257.1 H26.2" stroke="#c4c4c4" stroke-width="0.6" stroke-dasharray="0.6 0.6"/><path d="M23.2,267.1 H26.2" stroke="#c4c4c4" stroke-width="0.6" stroke-dasharray="0.6 0.6"/><path d="M23.2,277.1 H26.2" stroke="#c4c4c4" stroke-width="0.6" stroke-dasharray="0.6 0.6"/><path d="M23.2,287.1 H26.2" stroke="#c4c4c4" stroke-width="0.6" stroke-dasharray="0.6 0.6"/><path d="M31.2,297.1 H34.2" stroke="#c4c4c4" stroke-width="0.6" stroke-dasharray="0.6 0.6"/><path d="M40.2,307.1 H44.2" stroke="#c4c4c4" stroke-width="0.6" stroke-dasharray="0.6 0.6"/><path d="M40.2,317.1 H44.2" stroke="#c4c4c4" stroke-width="0.6" stroke-dasharray="0.6 0.6"/><path d="M31.2,327.1 H34.2" stroke="#c4c4c4" stroke-width="0.6" stroke-dasharray="0.6 0.6"/><path d="M31.2,337.1 H35.2" stroke="#c4c4c4" stroke-width="0.6" stroke-dasharray="0.6 0.6"/><path d="M40.2,347.1 H44.2" stroke="#c4c4c4" stroke-width="0.6" stroke-dasharray="0.6 0.6"/><path d="M31.2,357.1 H34.2" stroke="#c4c4c4" stroke-width="0.6" stroke-dasharray="0.6 0.6"/><path d="M31.2,367.1 H34.2" stroke="#c4c4c4" stroke-width="0.6" stroke-dasharray="0.6 0.6"/><path d="M31.2,377.1 H34.2" stroke="#c4c4c4" stroke-width="0.6" stroke-dasharray="0.6 0.6"/><path d="M31.2,387.1 H34.2" stroke="#c4c4c4" stroke-width="0.6" stroke-dasharray="0.6 0.6"/><path d="M23.2,397.1 H26.2" stroke="#c4c4c4" stroke-width="0.6" stroke-dasharray="0.6 0.6"/><path d="M23.2,407.1 H26.2" stroke="#c4c4c4" stroke-width="0.6" stroke-dasharray="0.6 0.6"/><path d="M23.2,417.1 H26.2" stroke="#c4c4c4" stroke-width="0.6" stroke-dasharray="0.6 0.6"/><path d="M23.2,427.1 H26.2" stroke="#c4c4c4" stroke-width="0.6" stroke-dasharray="0.6 0.6"/><path d="M23.2,437.1 H26.2" stroke="#c4c4c4" stroke-width="0.6" stroke-dasharray="0.6 0.6"/><rect x="4" y="84.89999999999999" width="4.4" height="4.4" fill="#fff" stroke="#8e8e8e" stroke-width="0.7"/><path d="M4.9,87.1 h2.6" stroke="#222" stroke-width="0.8"/><g transform="translate(10,82.89999999999999)"><path d="M1,7 V3 h1.6 V7z M3.4,7 V1.4 h1.6 V7z M5.6,7 V4 h1.4 V7z" fill="#5a5a5a"/><circle cx="5.8" cy="2" r="1.1" fill="#b03020"/><path d="M0.4,7.4 h7.2" stroke="#333" stroke-width="0.6"/></g><rect x="12" y="94.89999999999999" width="4.4" height="4.4" fill="#fff" stroke="#8e8e8e" stroke-width="0.7"/><path d="M12.9,97.1 h2.6" stroke="#222" stroke-width="0.8"/><rect x="21" y="104.89999999999999" width="4.4" height="4.4" fill="#fff" stroke="#8e8e8e" stroke-width="0.7"/><path d="M21.9,107.1 h2.6" stroke="#222" stroke-width="0.8"/><g transform="translate(27,102.89999999999999)"><path d="M1,1 h2.6 v3.4 h3.8 v2.8 h-6.4z" fill="#e6b84c" stroke="#7c5a14" stroke-width="0.6"/></g><rect x="29" y="114.89999999999999" width="4.4" height="4.4" fill="#fff" stroke="#8e8e8e" stroke-width="0.7"/><path d="M29.9,117.1 h2.6" stroke="#222" stroke-width="0.8"/><path d="M31.2,115.8 v2.6" stroke="#222" stroke-width="0.8"/><rect x="29" y="124.89999999999999" width="4.4" height="4.4" fill="#fff" stroke="#8e8e8e" stroke-width="0.7"/><path d="M29.9,127.1 h2.6" stroke="#222" stroke-width="0.8"/><path d="M31.2,125.8 v2.6" stroke="#222" stroke-width="0.8"/><rect x="29" y="134.9" width="4.4" height="4.4" fill="#fff" stroke="#8e8e8e" stroke-width="0.7"/><path d="M29.9,137.1 h2.6" stroke="#222" stroke-width="0.8"/><rect x="38" y="144.9" width="4.4" height="4.4" fill="#fff" stroke="#8e8e8e" stroke-width="0.7"/><path d="M38.9,147.1 h2.6" stroke="#222" stroke-width="0.8"/><path d="M40.2,145.79999999999998 v2.6" stroke="#222" stroke-width="0.8"/><g transform="translate(45,142.9)"><path d="M2.4,1 h2.4 v2.6 h1.6 v3 h-5.6 v-3 h1.6z" fill="#ecc860" stroke="#7c5a14" stroke-width="0.6"/></g><g transform="translate(44,152.9)"><path d="M0.8,2.6 l2,-1.4 l1,1.2 l3.6,-0.6 l-1.6,4.4 h-5z" fill="#fff" stroke="#c02818" stroke-width="0.8"/><path d="M1.6,5.4 h4.6" stroke="#e6b84c" stroke-width="1"/></g><rect x="38" y="164.9" width="4.4" height="4.4" fill="#fff" stroke="#8e8e8e" stroke-width="0.7"/><path d="M38.9,167.1 h2.6" stroke="#222" stroke-width="0.8"/><g transform="translate(44,162.9)"><path d="M0.8,3 l2,-1.6 l1,1.2 l3.6,-0.8 l-1.6,4.6 h-5z" fill="#e0481c" stroke="#8c2408" stroke-width="0.5"/><path d="M1.4,5.6 h4.6" stroke="#f0c060" stroke-width="0.9"/></g><g transform="translate(45,182.9)"><circle cx="3.6" cy="4" r="2.6" fill="#3c3c3c"/><circle cx="3.6" cy="4.2" r="1.2" fill="#e6c060"/></g><g transform="translate(45,192.9)"><path d="M2.6,6.8 V3 L4.6,1 V5z" fill="#e6d060" stroke="#2c3c8c" stroke-width="0.6"/></g><g transform="translate(45,202.9)"><path d="M2,1 h3 v1 h-1 v1.6 h1.6 v1.2 h-1.4 v1.4 h1.8 v1 h-6 v-1 h1.8 v-1.4 h-1.4 v-1.2 h1.6 v-1.6 h-1z" fill="#c88838" stroke="#6c3c0c" stroke-width="0.4"/></g><g transform="translate(44,212.9)"><path d="M0.8,6.6 V2.4 h1.4 v2.8 h1.4 v-1.6 h1.4 v1.6 h2.2 v1.4z" fill="#ecc070" stroke="#a87828" stroke-width="0.4"/></g><g transform="translate(44,222.9)"><path d="M0.8,6.6 l1,-4 h3 l2.6,2.6 v1.4z" fill="#3c5c4c" stroke="#1c2c2c" stroke-width="0.5"/><path d="M1,6.4 h6.2" stroke="#e6c060" stroke-width="0.7"/></g><rect x="38" y="234.9" width="4.4" height="4.4" fill="#fff" stroke="#8e8e8e" stroke-width="0.7"/><path d="M38.9,237.1 h2.6" stroke="#222" stroke-width="0.8"/><path d="M40.2,235.79999999999998 v2.6" stroke="#222" stroke-width="0.8"/><g transform="translate(44,232.9)"><path d="M0.6,4.4 q1.4,-3.4 4,-2.6 q1.6,0.6 1.6,2.6z" fill="#4c4c4c"/><rect x="3.6" y="4.2" width="3.8" height="3" fill="#e6c060" stroke="#5c4410" stroke-width="0.5"/><rect x="0.8" y="5" width="2" height="2" fill="#333"/></g><g transform="translate(44,242.9)"><path d="M0.8,6.8 V1.6 h1.6 V4.4 h4.8 v2.4z" fill="#4c4c4c"/><path d="M3.4,5 v1.6 M5,5 v1.6" stroke="#ddd" stroke-width="0.4"/></g><g transform="translate(27,252.90000000000003)"><path d="M1,1 V7 H7.4" fill="none" stroke="#333" stroke-width="0.7"/><path d="M1.2,6.4 Q2.4,2 4,3.4 T7,2.4" fill="none" stroke="#7c5a9c" stroke-width="0.6"/><rect x="0.6" y="0.8" width="6.8" height="6.4" fill="none" stroke="#9a9a9a" stroke-width="0.3"/></g><g transform="translate(27,262.90000000000003)"><path d="M2.2,0.8 h3.4 v1.2 h-1 v1.4 h1.8 v1.4 h-1.6 v1.2 h1.8 v1.2 h-7 v-1.2 h1.8 v-1.2 h-1.6 v-1.4 h1.8 v-1.4 h-1z" fill="#d08048" stroke="#6c2c0c" stroke-width="0.4"/></g><g transform="translate(27,272.90000000000003)"><path d="M3.4,0.6 h1.2 v7 h-1.2z M1,2.6 h6 v2.8 h-6z" fill="#d05030" stroke="#8c2c0c" stroke-width="0.3"/><path d="M0.4,4 h7.2" stroke="#333" stroke-width="0.4"/></g><rect x="21" y="284.90000000000003" width="4.4" height="4.4" fill="#fff" stroke="#8e8e8e" stroke-width="0.7"/><path d="M21.9,287.1 h2.6" stroke="#222" stroke-width="0.8"/><g transform="translate(27,282.90000000000003)"><path d="M0.8,7 V3.2 h1.8 V7z M3.2,7 V1.6 h1.6 V7z M5.4,7 V3.8 h1.6 V7z" fill="#4c5c8c"/><circle cx="5.8" cy="2" r="1.1" fill="#b03020"/><path d="M0.4,7.4 h7.2" stroke="#222" stroke-width="0.6"/></g><rect x="29" y="294.90000000000003" width="4.4" height="4.4" fill="#fff" stroke="#8e8e8e" stroke-width="0.7"/><path d="M29.9,297.1 h2.6" stroke="#222" stroke-width="0.8"/><g transform="translate(35,292.90000000000003)"><path d="M0.8,1 h2.4 v3.6 h3.8 v2.6 h-6.2z" fill="#5068b0" stroke="#1c2c6c" stroke-width="0.5"/><rect x="4" y="1.2" width="2.8" height="2.8" fill="#d03828"/></g><g transform="translate(35,322.90000000000003)"><path d="M0.8,6.8 l1.4,-4.6 h1.6 l-1,3 h1.4 l1.4,-4 h1.6 l-1.8,5.6z" fill="#3c9c3c" stroke="#1c5c1c" stroke-width="0.4"/><path d="M5.6,1 l1.8,1" stroke="#c02818" stroke-width="0.7"/></g><rect x="29" y="334.90000000000003" width="4.4" height="4.4" fill="#fff" stroke="#8e8e8e" stroke-width="0.7"/><path d="M29.9,337.1 h2.6" stroke="#222" stroke-width="0.8"/><g transform="translate(36,332.90000000000003)"><path d="M2.4,1 h2.4 v2.6 h1.6 v3 h-5.6 v-3 h1.6z" fill="#ecc860" stroke="#7c5a14" stroke-width="0.6"/></g><g transform="translate(35,352.90000000000003)"><path d="M0.8,2.6 l2,-1.4 l1,1.2 l3.6,-0.6 l-1.6,4.4 h-5z" fill="#fff" stroke="#c02818" stroke-width="0.8"/><path d="M1.6,5.4 h4.6" stroke="#e6b84c" stroke-width="1"/></g><rect x="29" y="364.90000000000003" width="4.4" height="4.4" fill="#fff" stroke="#8e8e8e" stroke-width="0.7"/><path d="M29.9,367.1 h2.6" stroke="#222" stroke-width="0.8"/><path d="M31.2,365.8 v2.6" stroke="#222" stroke-width="0.8"/><g transform="translate(35,362.90000000000003)"><path d="M0.8,3 l2,-1.6 l1,1.2 l3.6,-0.8 l-1.6,4.6 h-5z" fill="#e0481c" stroke="#8c2408" stroke-width="0.5"/><path d="M1.4,5.6 h4.6" stroke="#f0c060" stroke-width="0.9"/></g><g transform="translate(35,372.90000000000003)"><rect x="1" y="1" width="6" height="4.4" fill="#5c5c5c" stroke="#222" stroke-width="0.5"/><path d="M1.6,2.4 h4.8 M1.6,3.8 h4.8" stroke="#e0c060" stroke-width="0.6"/><path d="M0.6,6.8 h7" stroke="#333" stroke-width="0.9"/></g><rect x="29" y="384.90000000000003" width="4.4" height="4.4" fill="#fff" stroke="#8e8e8e" stroke-width="0.7"/><path d="M29.9,387.1 h2.6" stroke="#222" stroke-width="0.8"/><path d="M31.2,385.8 v2.6" stroke="#222" stroke-width="0.8"/><g transform="translate(35,382.90000000000003)"><path d="M0.6,4.4 q1.4,-3.4 4,-2.6 q1.6,0.6 1.6,2.6z" fill="#4c4c4c"/><rect x="3.6" y="4.2" width="3.8" height="3" fill="#e6c060" stroke="#5c4410" stroke-width="0.5"/><rect x="0.8" y="5" width="2" height="2" fill="#333"/></g><rect x="21" y="394.90000000000003" width="4.4" height="4.4" fill="#fff" stroke="#8e8e8e" stroke-width="0.7"/><path d="M21.9,397.1 h2.6" stroke="#222" stroke-width="0.8"/><path d="M23.2,395.8 v2.6" stroke="#222" stroke-width="0.8"/><g transform="translate(27,392.90000000000003)"><path d="M0.4,5.6 h2.2 l1.4,-4 l1.4,4 h2.2" fill="none" stroke="#222" stroke-width="0.8"/><path d="M1,7 h6" stroke="#555" stroke-width="0.6"/><circle cx="4" cy="2" r="0.9" fill="#333"/></g><g transform="translate(27,402.90000000000003)"><path d="M1,0.8 V7.2 M1,2.4 h4 M1,4.6 h5.6" stroke="#333" stroke-width="0.7" fill="none"/><rect x="3" y="1.2" width="2.6" height="2.2" fill="#d8d8d8" stroke="#444" stroke-width="0.4"/><path d="M3.4,5.2 l3,1.6" stroke="#c02818" stroke-width="0.8"/></g><g transform="translate(27,412.90000000000003)"><path d="M1,0.8 V7.2 M1,6.8 h6" stroke="#333" stroke-width="0.7" fill="none"/><path d="M1.6,5.6 l1.6,-3 l1.4,2 l2,-3.4" stroke="#c02818" stroke-width="0.7" fill="none"/><rect x="2.6" y="1" width="2.4" height="1.8" fill="#d8d8d8" stroke="#444" stroke-width="0.4"/></g><g transform="translate(27,422.90000000000003)"><path d="M1,1 V6.8 H7.2 M3,6.8 V4.4 M5,6.8 V3.4 M7,6.8 V4.8" stroke="#333" stroke-width="0.7" fill="none"/></g><g transform="translate(27,432.90000000000003)"><path d="M1,0.8 V7.2 H7.2" stroke="#333" stroke-width="0.7" fill="none"/><rect x="2.4" y="3" width="4" height="3" fill="#8c8c8c" stroke="#333" stroke-width="0.4"/><path d="M2.4,4.4 h4 M4.4,3 v3" stroke="#eee" stroke-width="0.3"/></g></svg>
<div class="a" style="left:125.6px;top:203px;width:2px;height:4px;border-top:1px solid #888;border-bottom:1px solid #888"></div>
<div class="a" style="left:127px;top:65px;width:30px;height:369px;background:#f4f4f4;border-left:1px solid #e4e4e4"></div>
<div class="a" style="left:128.5px;top:120px;width:27px;height:1px;background:#c4c4c4"></div>
<div class="a" style="left:128.5px;top:151px;width:27px;height:1px;background:#c4c4c4"></div>
<div class="a" style="left:128.5px;top:179.5px;width:27px;height:1px;background:#c4c4c4"></div>
<div class="a" style="left:128.5px;top:209.5px;width:27px;height:1px;background:#c4c4c4"></div>
<div class="a" style="left:128.5px;top:239.5px;width:27px;height:1px;background:#c4c4c4"></div>
<svg class="a" style="left:127px;top:65px" width="30" height="200" viewBox="127 65 30 200" font-family="Liberation Sans, sans-serif"><g transform="translate(0,0)"><path d="M131.6,68.0 h3.2 v5.2 h5.2 v3.4 h-8.4z" fill="#e8bc58" stroke="#8a6418" stroke-width="0.6"/><path d="M131.6,68.0 l1,-0.8 h3.2 l-1,0.8" fill="#f8e4a4" stroke="#8a6418" stroke-width="0.3"/><rect x="143.2" y="68.19999999999999" width="10.8" height="8.8" fill="#f4ecd2" stroke="#6c5a2c" stroke-width="0.6"/><rect x="143.2" y="68.19999999999999" width="10.8" height="2.4" fill="#3e68b0"/><path d="M145.6,71.6 v5 M148.2,71.6 v5 M151.2,71.6 v5 M143.2,74.0 h10.8" stroke="#8a7a4c" stroke-width="0.5"/></g><g transform="translate(0,0.8)"><path d="M131.4,86 l3.6,-3.2 l4.6,2 v3.6 l-3.6,3.2 l-4.6,-2z" fill="#e8bc58" stroke="#8a6418" stroke-width="0.6"/><path d="M131.4,86 l4.6,2 l3.6,-3.2 M136,88 v3.6" stroke="#8a6418" stroke-width="0.5" fill="none"/><path d="M130.6,83.4 l3,-2.6" stroke="#3060b0" stroke-width="0.8"/><path d="M140.6,90.8 h1.4 v-1.4z" fill="#222"/><g transform="translate(-1,0)"><path d="M146,82.4 l2,1.4 v4 l5,-2.6 l1.6,1.6 l-6.6,4.4 l-2,-1.6z" fill="#f8e4a4" stroke="#8a6418" stroke-width="0.6"/><path d="M144.4,82.6 l2.6,-2.2" stroke="#3060b0" stroke-width="0.8"/><path d="M154.6,90.8 h1.4 v-1.4z" fill="#222"/></g></g><g transform="translate(0,2.6)"><rect x="131.4" y="93" width="8.6" height="8.6" fill="#e8bc58" stroke="#8a6418" stroke-width="0.6"/><path d="M131.8,101.2 L139.6,93.4" stroke="#8a6418" stroke-width="0.6"/><path d="M140.6,103.2 h1.4 v-1.4z" fill="#222"/><g transform="translate(-1,0)"><path d="M145,96 l2.6,-1.6 v6 l-2.6,1.6z M148.4,95 h2.6 v6 h-2.6z M151.8,94.4 l2.6,1.6 v6 l-2.6,-1.6z" fill="#e8bc58" stroke="#8a6418" stroke-width="0.5"/><path d="M144.4,94.4 l2.6,-2.2" stroke="#3060b0" stroke-width="0.8"/><path d="M154.6,103.2 h1.4 v-1.4z" fill="#222"/></g></g><g transform="translate(0,4)"><path d="M131.4,108 l2.4,-2.6 h6 v6 l-2.4,2.6 h-6z" fill="#e8bc58" stroke="#8a6418" stroke-width="0.6"/><path d="M131.4,108 h6 v6 M137.4,108 l2.4,-2.6" stroke="#8a6418" stroke-width="0.5" fill="none"/><rect x="131.4" y="108" width="6" height="6" fill="#f8e4a4"/><path d="M140.6,115.8 h1.4 v-1.4z" fill="#222"/></g><g transform="translate(0,-0.5)"><path d="M133.6,126.4 h3.4 v5 h2.6 v3.6 h-8.6 v-3.6 h2.6z" fill="#e8bc58" stroke="#8a6418" stroke-width="0.6"/><path d="M140.6,136.8 h1.4 v-1.4z" fill="#222"/><g transform="translate(-1,0)"><path d="M146.4,126.4 h2.8 v5 h-2.8z M145,131.4 h9.6 v3.6 h-9.6z" fill="#e8bc58" stroke="#8a6418" stroke-width="0.6"/><rect x="150.6" y="127.4" width="2.6" height="2" fill="#c83020"/><path d="M154.6,136.8 h1.4 v-1.4z" fill="#222"/></g></g><g transform="translate(0,1)"><rect x="131" y="144" width="9" height="3.6" fill="#e8bc58" stroke="#8a6418" stroke-width="0.6"/><path d="M133,144.6 l5.4,-5.6" stroke="#c06030" stroke-width="1.2"/><path d="M138,138.6 l1.8,-1.4 M136.4,138 l0.6,-1.2 M139.6,140.4 l1.2,-0.4" stroke="#3060b0" stroke-width="0.5"/></g><g transform="translate(0,0.5)"><path d="M130.4,157.4 h6" stroke="#3060b0" stroke-width="0.6" stroke-dasharray="1.4 0.8"/><path d="M134,155.4 v4 M134.4,158.4 l4,4.4" stroke="#333" stroke-width="0.6"/><circle cx="138.6" cy="163" r="1" fill="none" stroke="#333" stroke-width="0.5"/><path d="M140.6,165.8 h1.4 v-1.4z" fill="#222"/><g transform="translate(-1,0)"><path d="M146,155 h3 v5 h5.4 v3.2 h-8.4z" fill="#e8bc58" stroke="#8a6418" stroke-width="0.6"/><path d="M150,156.6 l4,3" stroke="#c06030" stroke-width="0.5"/></g></g><g transform="translate(0,0.5)"><path d="M131,168.6 h3.2 v3.6 h4.6 v4.4 h-7.8z" fill="#e8bc58" stroke="#8a6418" stroke-width="0.6"/><rect x="131" y="168.6" width="3.2" height="3" fill="#c88838"/><path d="M140.6,177.8 h1.4 v-1.4z" fill="#222"/><g transform="translate(-1,0)"><path d="M146,167.4 h2.6 v5.6 h5.4 v3 h-8z" fill="#f8e4a4" stroke="#8a6418" stroke-width="0.6"/><path d="M150.6,172 l3.6,4.6 M153.6,172.6 l-2.6,3.6" stroke="#a03020" stroke-width="0.6"/><path d="M154.6,177.8 h1.4 v-1.4z" fill="#222"/></g></g><g transform="translate(0,1)"><text x="130.4" y="188.6" font-size="3.4" font-weight="bold" fill="#222">(XYZ)</text><path d="M135.4,190 v4 M133,192.6 h5" stroke="#3060b0" stroke-width="0.6"/><path d="M140.6,194.4 h1.4 v-1.4z" fill="#222"/><g transform="translate(-1,0)"><path d="M149.6,184 v6 l-4,3.6 M149.6,190 l4.4,3.6" stroke="#333" stroke-width="0.6" fill="none"/><path d="M147.6,186.6 h4" stroke="#3060b0" stroke-width="0.5"/><circle cx="149.6" cy="190" r="0.8" fill="#3060b0"/><path d="M154.6,194.4 h1.4 v-1.4z" fill="#222"/></g></g><g transform="translate(0,2.5)"><path d="M135,199 l4.6,-2.6 v5.6 l-4.6,2.6z" fill="#e8bc58" stroke="#8a6418" stroke-width="0.5"/><path d="M131.4,197.4 v6 h4 M131.4,203.4 l2.6,-2" stroke="#333" stroke-width="0.6" fill="none"/><path d="M140.6,205.8 h1.4 v-1.4z" fill="#222"/><g transform="translate(-1,0)"><path d="M149.6,195.6 v5.4 l-4,3.4 M149.6,201 l4.4,3.4" stroke="#3060b0" stroke-width="0.6" fill="none" stroke-dasharray="1.2 0.7"/><circle cx="149.6" cy="196" r="0.8" fill="#c83020"/><circle cx="149.6" cy="201" r="0.8" fill="#c83020"/><path d="M154.6,205.8 h1.4 v-1.4z" fill="#222"/></g></g><g transform="translate(0,2)"><path d="M131.4,216 l3,-3 h3.4 l-3,3z M135,221.4 l3,-3 h3 l-2.6,4.4z" fill="#f8e4a4" stroke="#8a6418" stroke-width="0.6"/><path d="M132,218 q0,3.6 2.6,3.6" stroke="#8a6418" stroke-width="0.6" fill="none"/><g transform="translate(-1,0)"><rect x="144.6" y="212.8" width="10" height="8.6" fill="#f0dc9c" stroke="#8a6418" stroke-width="0.6"/><path d="M145.6,218 l1.6,-2.6 l1.6,2.6 l1.6,-2.6 l1.6,2.6 l1.6,-2.6" stroke="#2c6c3c" stroke-width="0.7" fill="none"/><rect x="144.6" y="212.8" width="10" height="1.8" fill="#d8b860"/></g></g><g transform="translate(0,3)"><rect x="131.4" y="225.6" width="7" height="7.6" fill="#f8e4a4" stroke="#8a6418" stroke-width="0.6"/><path d="M134,231 l5.4,-6" stroke="#a03020" stroke-width="1"/><rect x="133" y="227.6" width="3" height="3" fill="#c88838"/><path d="M140.6,234.20000000000002 h1.4 v-1.4z" fill="#222"/><g transform="translate(-1,0)"><path d="M146,225.4 l7.4,7.6" stroke="#2c6c9c" stroke-width="1.2"/><path d="M153.4,225 l-7.6,8" stroke="#2c8c3c" stroke-width="1.2"/><path d="M145.4,224.6 l2.4,0.4 l-2,2z" fill="#2c6c9c"/><path d="M154.6,234.20000000000002 h1.4 v-1.4z" fill="#222"/></g></g><g transform="translate(0,3.5)"><path d="M130.6,244 l2.6,-1.6 l2,1.4 l2.6,-3.4 l2.4,1.6 l-1.4,3 l2,1.4 l-3,3.6 h-7z" fill="#e8bc58" stroke="#8a6418" stroke-width="0.6"/><g transform="translate(-1,0)"><path d="M144.6,244.6 l3,-3 l3.6,1.6 l3.6,1.4 l-1.6,3.6 l-3.6,-1 l-2.6,1.4z" fill="#5ca03c" stroke="#2c5c1c" stroke-width="0.5"/><path d="M148,246.6 l5,1.6 l-1,2 h-4z" fill="#e8bc58" stroke="#8a6418" stroke-width="0.5"/></g></g></svg>
<div class="a" style="left:157px;top:65px;width:643px;height:369px;background:linear-gradient(#1b2c47 0%,#2d3d58 50.1%,#33425c 60.2%,#4d5b75 70.2%,#69778f 79.9%,#8794ab 90.0%,#a2afc6 100%)">
<svg class="a" style="left:0;top:0" width="643" height="369" viewBox="157 65 643 369">
<defs>
<linearGradient id="cy" gradientUnits="userSpaceOnUse" x1="474" y1="222" x2="516" y2="272"><stop offset="0" stop-color="#9c9c9c"/><stop offset="0.18" stop-color="#cacaca"/><stop offset="0.38" stop-color="#f0f0f0"/><stop offset="0.55" stop-color="#ffffff"/><stop offset="1" stop-color="#fbfbfb"/></linearGradient>
<linearGradient id="cap" gradientUnits="userSpaceOnUse" x1="436" y1="260" x2="484" y2="280"><stop offset="0" stop-color="#e2e2e2"/><stop offset="1" stop-color="#c6c6c6"/></linearGradient>
<linearGradient id="wf" gradientUnits="userSpaceOnUse" x1="500" y1="76" x2="360" y2="240"><stop offset="0" stop-color="#f9f9f9"/><stop offset="1" stop-color="#ffffff"/></linearGradient>
</defs>
<polygon points="500,74.8 489,123 354.4,248 377.8,191.5" fill="url(#wf)"/>
<polygon points="500,74.8 619,189 624,245.5 489,123" fill="#b3b3b3"/>
<polygon points="489,123 624,245.5 482.6,347.6 354.4,248" fill="#c16200"/>
<path d="M502,202 Q532.5,221 553.75,247 L485,298.75 L485.4,290.5 L450,245.6 Z" fill="url(#cy)"/>
<path d="M434.5,259.5 L450,245.6 Q478,258 485.4,290.5 L485,298.75 Z" fill="url(#cap)"/>
<path d="M450,245.6 Q478,258 485.4,290.5 L485,298.75" fill="none" stroke="#3a3a3a" stroke-width="0.6"/>
<line x1="500" y1="75" x2="489" y2="123" stroke="#383838" stroke-width="0.6"/>
<!-- triad -->
<g stroke-linecap="butt">
<line x1="208.4" y1="400" x2="197" y2="390.8" stroke="#13a813" stroke-width="2.2"/>
<polygon points="192.6,387.2 200.2,388 196.2,393" fill="#19c219"/>
<line x1="208.4" y1="400" x2="199" y2="408" stroke="#0a0ab8" stroke-width="2.4"/>
<polygon points="193.8,412.4 197,405.4 201.6,410.6" fill="#0b0bc8"/>
<polygon points="208.4,400 210.6,407.6 206.4,412.6 203,408.4" fill="#c01414"/>
</g>
<g fill="#ffffff" font-family="Liberation Sans, sans-serif" font-size="5" font-weight="bold">
<text x="186.4" y="384.8">Y</text><text x="188" y="417">Z</text><text x="203.4" y="417.4">X</text></g>
<!-- compass -->
<g stroke="#e8eef8" stroke-width="0.7" fill="#0f6f86">
<path d="M744.6,87 Q741,96 747.2,102 Q752,94 744.6,87 Z"/>
<path d="M744.6,87 L756,95.4 L747.2,102 Q752,94 744.6,87 Z" fill="#0e5a8c"/>
<path d="M751.6,98.6 L754.6,96.4 L754,102.4 Z" fill="#141c6a"/>
<line x1="745" y1="86" x2="764" y2="100.5"/>
<ellipse cx="763.4" cy="101" rx="8.6" ry="3.2" transform="rotate(-48 763.4 101)"/>
</g>
<circle cx="744" cy="84.4" r="1.5" fill="#e8dcf8"/>
<circle cx="763.8" cy="100.2" r="1.7" fill="#d01820"/>
<g fill="#d8c84a" font-family="Liberation Sans, sans-serif" font-size="3.6" font-weight="bold">
<text x="739" y="82.4">Y</text><text x="743.4" y="104.6">Z</text><text x="752.8" y="104.6">X</text></g>
</svg>
</div>
<div class="a" style="left:126px;top:434px;width:674px;height:16.5px;background:linear-gradient(#fdfdfd,#f6f6f6 40%,#eeeeee)"></div>
<div class="a" style="left:130px;top:436px;width:9.5px;height:10.5px;border:1px solid #bcbcbc;background:#f7f7f7"></div>
<div class="a" style="left:140.5px;top:436px;width:9.5px;height:10.5px;border:1px solid #bcbcbc;background:#f7f7f7"></div>
<svg class="a" style="left:130px;top:436px" width="21" height="11" viewBox="130 436 21 11"><path d="M131.6,441.2 l3,-2.6 v1.6 h3.4 v2 h-3.4 v1.6z" fill="#c4c4c4" stroke="#8c8c8c" stroke-width="0.4"/><path d="M142.4,438.4 l5.6,5.8 M148,438.4 l-5.6,5.8" stroke="#c81818" stroke-width="1.2"/></svg>
<svg class="a" style="left:768px;top:434px" width="32" height="17" viewBox="768 434 32 17" font-family="Liberation Sans, sans-serif"><text x="777.4" y="440.4" font-size="6.4" font-weight="bold" font-style="italic" fill="#d8402c">3</text><text x="772.6" y="446" font-size="8" font-weight="bold" font-style="italic" fill="#1c2c7c">D</text><text x="778.8" y="446" font-size="8" font-weight="bold" font-style="italic" fill="#e8a020">S</text><text x="775.8" y="449.8" font-size="4.3" font-weight="bold" font-style="italic" fill="#1c2c6c" textLength="22.2" lengthAdjust="spacingAndGlyphs">SIMULIA</text></svg>
<div class="a" style="left:0;top:450px;width:800px;height:31px;background:#f0f0f0"></div>
<div class="a" style="left:18.5px;top:450.5px;width:774px;height:30px;background:#fff;border:1px solid #a2a2a2"></div>
<div class="a" style="left:783px;top:451.5px;width:8.5px;height:28.5px;background:#f0f0f0;border-left:1px solid #e0e0e0"></div>
<svg class="a" style="left:783px;top:451px" width="17" height="30" viewBox="783 451 17 30"><path d="M787.4,455.6 l2,2.6 h-4z" fill="#444"/><path d="M787.4,477 l2,-2.6 h-4z" fill="#444"/><rect x="784.4" y="465.4" width="6" height="5.4" rx="0.8" fill="#e4e4e4" stroke="#9a9a9a" stroke-width="0.6"/><path d="M785.6,467 h3.6 M785.6,468.2 h3.6 M785.6,469.4 h3.6" stroke="#777" stroke-width="0.4"/><g fill="#9a9a9a"><circle cx="798" cy="472.6" r="0.5"/><circle cx="796" cy="474.6" r="0.5"/><circle cx="798" cy="474.6" r="0.5"/><circle cx="794" cy="476.6" r="0.5"/><circle cx="796" cy="476.6" r="0.5"/><circle cx="798" cy="476.6" r="0.5"/></g></svg>
<div class="a" style="left:2.5px;top:453px;width:14px;height:14.5px;border:1px solid #b0b0b0;background:#f4f2ea"></div>
<svg class="a" style="left:2.5px;top:453px" width="14" height="15" viewBox="0 0 14 15"><rect x="3" y="3" width="8" height="8.6" fill="#efe6c4" stroke="#b0a470" stroke-width="0.6"/><path d="M3.6,11.6 l2.4,-2.4 l1.6,1.2" stroke="#6c6c4c" stroke-width="0.8" fill="none"/><path d="M3,12.6 h5" stroke="#555" stroke-width="0.7"/></svg>
<div class="a" style="left:2.5px;top:469px;width:14px;height:12px;border:1px solid #8c7c2c;background:#f2dc6c"></div>
<div class="t" style="left:4.2px;top:471.6px;font-size:6.4px;font-weight:bold;color:#222;letter-spacing:-0.6px">&gt;&gt;&gt;</div>
<div class="m" style="left:22px;top:453.1px">The contents of viewport "Viewport: 1" have been copied to the clipboard.</div>
<div class="m" style="left:22px;top:459.55px">The instance Part-2-1 was translated by 0., 0., 25. with respect to the assembly coordinate system</div>
<div class="m" style="left:22px;top:466.0px">The surface 'Surf-part2' has been created (1 face).</div>
<div class="m" style="left:22px;top:472.45000000000005px">The surface 'Surf-part3' has been created (1 face).</div>
<div class="a" style="left:0;top:480.5px;width:800px;height:19.5px;background:linear-gradient(90deg,#2f84d4 0%,#2a7bcc 12%,#2272c6 35%,#1e6cc2 55%,#1c5fae 72%,#1a4f96 88%,#1a4a8e 100%)"></div>
<div class="a" style="left:0;top:480.5px;width:800px;height:1px;background:rgba(160,200,240,.55)"></div>
<div class="a" style="left:0;top:481.5px;width:800px;height:8px;background:linear-gradient(rgba(255,255,255,.16),rgba(255,255,255,.03))"></div>
<div class="a" style="left:572px;top:481px;width:30px;height:19px;background:linear-gradient(115deg,transparent 35%,rgba(180,215,250,.35) 50%,transparent 65%)"></div>
<div class="a" style="left:117px;top:481.5px;width:29px;height:18.5px;border:1px solid rgba(20,50,100,.55);border-bottom:0;border-radius:1.5px;box-shadow:inset 0 0 0 1px rgba(255,255,255,.35);background:linear-gradient(#78aee6,#4c90d8 45%,#3f86d2)"></div>
<div class="a" style="left:146.5px;top:481.5px;width:29px;height:18.5px;border:1px solid rgba(20,50,100,.55);border-bottom:0;border-radius:1.5px;box-shadow:inset 0 0 0 1px rgba(255,255,255,.35);background:linear-gradient(#78aee6,#4c90d8 45%,#3f86d2)"></div>
<div class="a" style="left:176px;top:481.5px;width:28.5px;height:18.5px;border:1px solid rgba(20,50,100,.55);border-bottom:0;border-radius:1.5px;box-shadow:inset 0 0 0 1px rgba(255,255,255,.35);background:linear-gradient(#a9cbef,#7fb1e6 45%,#6ea5e0)"></div>
<div class="a" style="left:205px;top:481.5px;width:28.5px;height:18.5px;border:1px solid rgba(20,50,100,.55);border-bottom:0;border-radius:1.5px;box-shadow:inset 0 0 0 1px rgba(255,255,255,.35);background:linear-gradient(#78aee6,#4c90d8 45%,#3f86d2)"></div>
<svg class="a" style="left:0;top:480px" width="800" height="20" viewBox="0 480 800 20" font-family="Liberation Sans, sans-serif"><defs><radialGradient id="orb" cx="0.5" cy="0.35" r="0.7"><stop offset="0" stop-color="#7cc0f4"/><stop offset="0.6" stop-color="#2c68b8"/><stop offset="1" stop-color="#163c7c"/></radialGradient></defs><circle cx="12" cy="490.6" r="8.6" fill="url(#orb)" stroke="#12386c" stroke-width="0.5"/><circle cx="12" cy="490.6" r="7.7" fill="none" stroke="rgba(190,225,255,.75)" stroke-width="0.9"/><ellipse cx="12" cy="486.6" rx="5.6" ry="3" fill="rgba(255,255,255,.28)"/><path d="M7.6,487.4 q2,-1 3.8,-0.2 l-0.6,3.2 q-1.8,-0.8 -3.8,0.2z" fill="#e8502c"/><path d="M12.2,487.4 q2,0.9 4,-0.2 l-0.6,3.2 q-2,1.1 -4,0.2z" fill="#7cc030"/><path d="M7,491.4 q2,-1 3.8,-0.2 l-0.6,3.2 q-1.8,-0.8 -3.8,0.2z" fill="#3c9ce8"/><path d="M11.6,491.4 q2,0.9 4,-0.2 l-0.6,3.2 q-2,1.1 -4,0.2z" fill="#f8c828"/><text x="34.6" y="497.4" font-size="26" font-weight="bold" fill="#58c4f6" stroke="#c8ecfc" stroke-width="0.5">e</text><path d="M36.4,495 Q33.4,491 41,485.6 Q48.6,481 50.4,484.4" fill="none" stroke="#f4cc3c" stroke-width="1.1"/><path d="M64.4,486.4 h5 l1,1.2 h9 v9.6 h-15z" fill="#e8cc7c" stroke="#a08838" stroke-width="0.5"/><rect x="66" y="485.4" width="11.6" height="4" fill="#f8f4e4" stroke="#b8a868" stroke-width="0.4"/><path d="M64.4,489.6 h15 v7.6 h-15z" fill="#f4e29c" stroke="#a08838" stroke-width="0.5"/><rect x="68" y="493" width="8" height="3.2" fill="#a8c8e8" stroke="#6888a8" stroke-width="0.4"/><rect x="95" y="485.6" width="11" height="10.6" rx="1" fill="#7caee4" stroke="#c8dcf4" stroke-width="0.6"/><circle cx="100.4" cy="491" r="4.2" fill="#f08020" stroke="#f8d8a8" stroke-width="0.6"/><path d="M99,488.8 v4.4 l3.6,-2.2z" fill="#fff"/><circle cx="131.6" cy="490.6" r="6.6" fill="#fdfdfd" stroke="#2060b0" stroke-width="1"/><text x="127.6" y="495" font-size="12" font-weight="bold" fill="#1c64b8">S</text><rect x="153" y="485" width="15.6" height="10.6" fill="#0a0a0a" stroke="#555" stroke-width="0.5"/><rect x="153" y="485" width="15.6" height="1.6" fill="#c8c8c8"/><text x="154" y="490" font-size="3" fill="#ddd" font-family="Liberation Mono, monospace">C:\_</text><path d="M184.6,484 H195.4 Q192.4,487 192.4,490.4 Q192.4,493.8 195.4,497 H184.6 Q187.6,493.8 187.6,490.4 Q187.6,487 184.6,484Z" fill="#6c60c0" stroke="#3c3488" stroke-width="0.5"/><ellipse cx="190" cy="490.4" rx="7.2" ry="2.3" fill="#c4bcf0" stroke="#4c44a0" stroke-width="0.6"/><ellipse cx="190" cy="490" rx="5" ry="0.9" fill="#f0ecfc"/><rect x="213.4" y="484" width="13" height="13" rx="2.4" fill="#1c84e4" stroke="#8cc4f8" stroke-width="0.6"/><text x="215" y="493" font-size="9" font-weight="bold" fill="#fff">gj</text><rect x="673.6" y="486" width="7.4" height="7.4" rx="1" fill="#e8642c"/><path d="M675,488 h4.6 M675,489.8 h4.6 M675,491.6 h4.6" stroke="#fff" stroke-width="0.6"/><rect x="689" y="486" width="8" height="7.6" rx="1" fill="#2c9cf0"/><text x="690" y="492.2" font-size="5.4" font-weight="bold" fill="#fff">gj</text><ellipse cx="703.6" cy="490.6" rx="2.8" ry="3.6" fill="#222"/><ellipse cx="703.6" cy="491.4" rx="1.6" ry="2.2" fill="#f4f4f4"/><circle cx="703.6" cy="487.4" r="1.8" fill="#222"/><path d="M701.4,494 h4.4" stroke="#f0a820" stroke-width="1"/><circle cx="714" cy="490.2" r="4" fill="#d83838" stroke="#f8b8b8" stroke-width="0.5"/><text x="712.4" y="492.4" font-size="5" font-weight="bold" fill="#fff">E</text><path d="M726,486 q2,1.2 4,1 q0.4,5 -4,7.6 q-4.4,-2.6 -4,-7.6 q2,0.2 4,-1z" fill="#f0a030" stroke="#fff" stroke-width="0.5"/><rect x="735" y="486.4" width="7.6" height="7" rx="1" fill="#e4ece4" stroke="#4c6c4c" stroke-width="0.6"/><path d="M736.4,490 l2,2 l3,-3.6" stroke="#2c8c3c" stroke-width="0.9" fill="none"/><path d="M745.4,489 h2 l2.4,-2.2 v7 l-2.4,-2.2 h-2z" fill="#f4f4f4"/><circle cx="751" cy="492.6" r="1.8" fill="#e03020"/><path d="M750.2,491.8 l1.6,1.6 M751.8,491.8 l-1.6,1.6" stroke="#fff" stroke-width="0.4"/></svg>
<div class="t" style="left:768.6px;top:482.8px;font-size:6.6px;color:#fff">13:33</div>
<div class="t" style="left:762.6px;top:490.6px;font-size:6.6px;color:#fff">2014/8/25</div>
<div class="a" style="left:795.5px;top:481px;width:4.5px;height:19px;border-left:1px solid rgba(10,30,70,.6);background:linear-gradient(rgba(255,255,255,.25),rgba(255,255,255,.05))"></div>
<div class="t" style="left:735.4px;top:476.7px;height:13px;line-height:13px;font-size:10.8px;letter-spacing:0;color:#43b049;opacity:.62;font-weight:bold;font-family:'Liberation Sans','Noto Sans CJK SC',sans-serif">绿色资源网</div>
</body></html>
